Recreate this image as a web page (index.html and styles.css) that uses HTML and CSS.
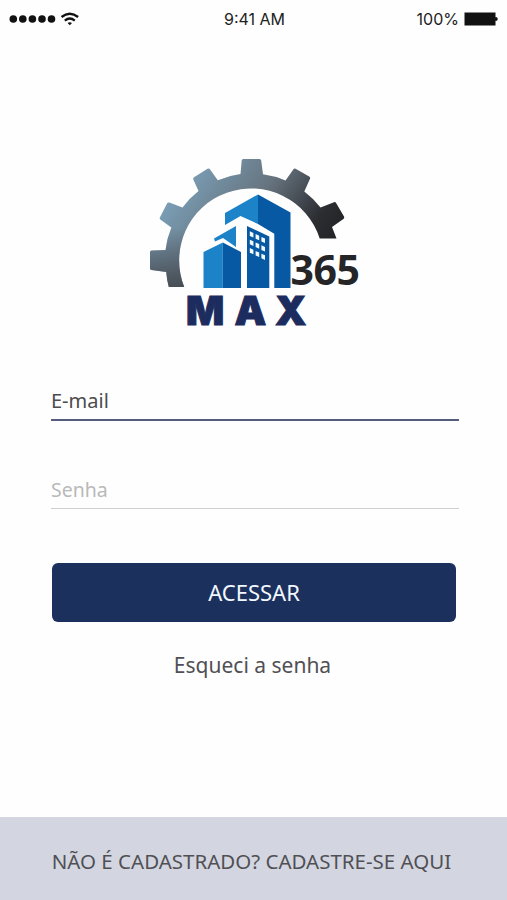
FILE: index.html
```html
<!DOCTYPE html>
<html lang="pt-BR">
<head>
    <meta charset="UTF-8">
    <meta name="viewport" content="width=device-width, initial-scale=1.0">
    <title>Max 365</title>
    <link rel="stylesheet" href="styles.css">
</head>
<body>
    <header class="status-bar">
        <div class="signal">
            <svg width="72" height="16" viewBox="8 11 72 16">
                <g fill="#111">
                    <circle cx="13.3" cy="19" r="3.8"/>
                    <circle cx="22.8" cy="19" r="3.8"/>
                    <circle cx="32.4" cy="19" r="3.8"/>
                    <circle cx="42" cy="19" r="3.8"/>
                    <circle cx="51.5" cy="19" r="3.8"/>
                    <path d="M67.6 22.9L69.8 25.2L72 22.9Q69.8 21.4 67.6 22.9z"/>
                </g>
                <path d="M61.5 17Q69.8 10.4 78.1 17M64.8 20.6Q69.8 16.4 74.8 20.6" fill="none" stroke="#111" stroke-width="2.3"/>
            </svg>
        </div>
        <span class="time">9:41 AM</span>
        <div class="battery">
            <span>100%</span>
            <svg width="35" height="14" viewBox="0 0 35 14">
                <path d="M.5.5h31v4.7h1.6q1.4 1.6 0 3.6h-1.6v4.7H.5z" fill="#111"/>
            </svg>
        </div>
    </header>

    <main class="login">
        <svg class="logo" width="230" height="180" viewBox="140 150 230 180">
            <defs>
                <linearGradient id="gear" gradientUnits="userSpaceOnUse" x1="175" y1="185" x2="310" y2="285">
                    <stop offset="0" stop-color="#7ba0b8"/>
                    <stop offset=".45" stop-color="#66737e"/>
                    <stop offset=".8" stop-color="#2b2d31"/>
                    <stop offset="1" stop-color="#202124"/>
                </linearGradient>
                <linearGradient id="gearLeft" gradientUnits="userSpaceOnUse" x1="0" y1="228" x2="0" y2="295">
                    <stop offset="0" stop-color="#43484f" stop-opacity="0"/>
                    <stop offset="1" stop-color="#43484f"/>
                </linearGradient>
            </defs>

            <!-- gear -->
            <path d="M168.8 287A86.5 86.5 0 0 1 166.2 272L151.5 270Q150 269.8 150 268.5V252Q150 250.6 151.5 250.5L165.5 250A86.5 86.5 0 0 1 171.3 227.5L160.3 219.5Q159.2 218.6 160 217.3L167 203.6Q167.8 202.1 169.3 202.5L182.5 207.5A86.5 86.5 0 0 1 198.5 191L193.3 179.5Q192.8 178 194 177.2L207.5 168.8Q209 168 209.9 169.3L217.8 180.2A86.5 86.5 0 0 1 240.5 174L241.7 160.5Q241.8 159 243.3 159H259.5Q261 159 261.2 160.5L263 174.3A86.5 86.5 0 0 1 285.5 180.5L293.3 169.4Q294.2 168 295.6 168.8L309.2 176.5Q310.6 177.4 310 178.8L304.3 191.5A86.5 86.5 0 0 1 320.5 207.5L334 202.2Q335.4 201.7 336.1 203L344 216.5Q344.7 218 343.4 218.9L332 227Q334 232 336.5 238.5H319.7A72 72 0 1 0 184.2 287z" fill="url(#gear)"/>
            <path d="M168.8 287A86.5 86.5 0 0 1 166.2 272L151.5 270Q150 269.8 150 268.5V252Q150 250.6 151.5 250.5L165.5 250A86.5 86.5 0 0 1 171.3 228H187A72 72 0 0 0 184.2 287z" fill="url(#gearLeft)"/>

            <!-- buildings -->
            <path d="M225 213L258 194.5V224L240.5 216L225 225z" fill="#1d83c9"/>
            <path d="M258 194.5L290.5 212.5V288H274.3V233.8L258 224z" fill="#0659a2"/>
            <path d="M214 238.5L236 226V247L223 238L215 241.5z" fill="#1d83c9"/>
            <path d="M203.5 252L222.8 242.5V288H203.5z" fill="#1d83c9"/>
            <path d="M222.8 242.5L241 252V288H222.8z" fill="#0659a2"/>
            <path d="M247 226L269.3 236.5V288H247z" fill="#0659a2"/>

            <!-- windows -->
            <path d="M249.8 231.3l3.6 1.6v4.6l-3.6-1.6zM255.6 234.1l3.6 1.6v4.6l-3.6-1.6zM261.4 236.9l3.6 1.6v4.6l-3.6-1.6zM249.8 239.7l3.6 1.6v4.6l-3.6-1.6zM255.6 242.5l3.6 1.6v4.6l-3.6-1.6zM261.4 245.3l3.6 1.6v4.6l-3.6-1.6zM249.8 248.1l3.6 1.6v4.6l-3.6-1.6zM255.6 250.9l3.6 1.6v4.6l-3.6-1.6zM261.4 253.7l3.6 1.6v4.6l-3.6-1.6z" fill="#f4f9fd"/>

            <text class="logo-number" x="290.5 313.5 336.5" y="285">365</text>
            <text class="logo-name" x="186 234.5 275" y="325">MAX</text>
        </svg>

        <form class="login-form">
            <input type="email" class="email" placeholder="E-mail">
            <input type="password" class="password" placeholder="Senha">
            <button type="submit">ACESSAR</button>
        </form>
        <a class="forgot" href="#">Esqueci a senha</a>
    </main>

    <footer class="register">
        <a href="#">NÃO É CADASTRADO? CADASTRE-SE AQUI</a>
    </footer>
</body>
</html>
```
FILE: styles.css
```css
* {
    box-sizing: border-box;
}

body {
    font-family: "Noto Sans", sans-serif;
    margin: 0;
    height: 900px;
    background-color: #fefefe;
    display: flex;
    flex-direction: column;
}

a {
    text-decoration: none;
    color: #505054;
}

.status-bar {
    height: 38px;
    padding: 0 8px;
    display: grid;
    grid-template-columns: 1fr auto 1fr;
    align-items: center;
    font-family: Inter, sans-serif;
    font-size: 16px;
    color: #222;
}

.time {
    padding-left: 2px;
}

.signal,
.battery {
    display: flex;
    align-items: center;
}

.battery {
    justify-content: flex-end;
    gap: 5px;
}

.login {
    flex-grow: 1;
    display: flex;
    flex-direction: column;
    align-items: center;
    padding: 112px 0 0 3px;
}

.logo {
    overflow: visible;
}

.logo-number {
    font-family: "Noto Sans", sans-serif;
    font-size: 41px;
    font-weight: 700;
    fill: #252527;
}

.logo-name {
    font-family: Inter, sans-serif;
    font-size: 40px;
    font-weight: 900;
    fill: #1d2c5e;
    stroke: #1d2c5e;
    stroke-width: 1px;
}

.login-form {
    width: 408px;
    display: flex;
    flex-direction: column;
}

input {
    height: 41px;
    padding: 2px 0 0;
    border: none;
    border-bottom: 2px solid #555d7c;
    background: none;
    font-family: inherit;
    font-size: 20px;
    outline: none;
}

.email {
    margin-top: 50px;
}

.email::placeholder {
    color: #4c4c4e;
}

.password {
    margin-top: 47px;
    font-size: 19.5px;
    border-bottom: 1px solid #cfcfcf;
}

.password::placeholder {
    color: #b9b9b9;
}

button {
    height: 59px;
    margin: 54px 3px 0 1px;
    padding: 0 0 2px;
    border: none;
    border-radius: 6px;
    background-color: #1c305e;
    color: #f2f8ff;
    font-family: inherit;
    font-size: 22px;
    cursor: pointer;
}

.forgot {
    margin: 29px 5px 0 0;
    font-size: 21px;
}

.register {
    height: 83px;
    padding: 4px 4px 0 0;
    background-color: #d3d6e1;
    display: flex;
    align-items: center;
    justify-content: center;
    font-size: 20.5px;
}
```
